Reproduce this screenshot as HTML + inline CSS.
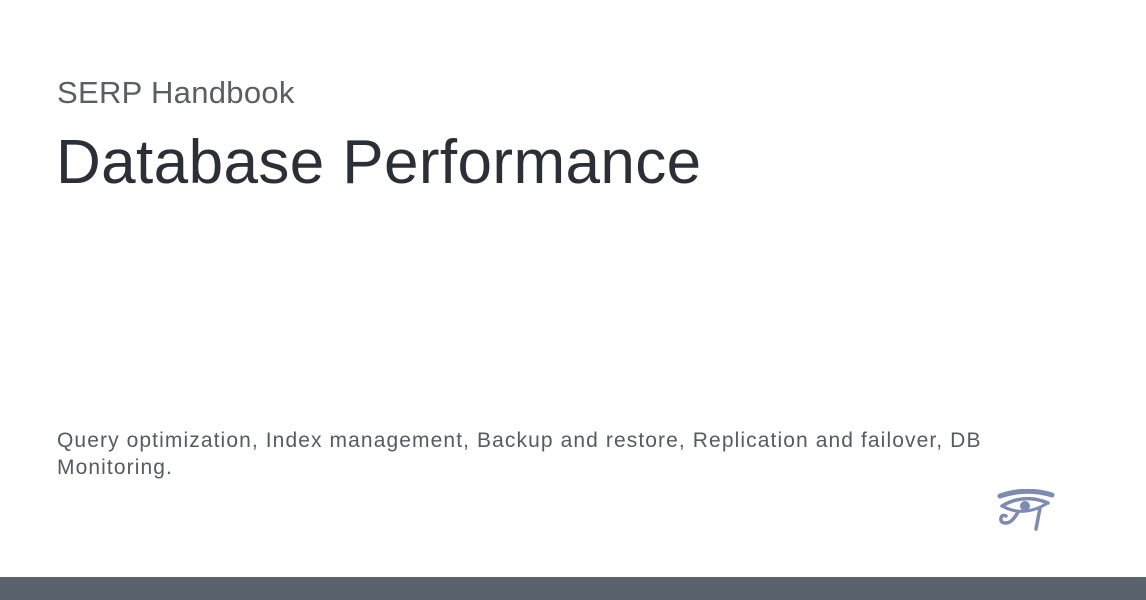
<!DOCTYPE html>
<html><head><style>
html,body{margin:0;padding:0;width:1146px;height:600px;background:#fff;overflow:hidden;font-family:"Liberation Sans",sans-serif;position:relative}
.a{position:absolute;left:57px;top:75px;font-size:31px;letter-spacing:0.3px;color:#5a5f66;white-space:nowrap}
.b{position:absolute;left:56px;top:127px;font-size:62px;letter-spacing:0.4px;color:#2b3038;white-space:nowrap}
.c{position:absolute;left:57px;top:427px;font-size:21px;line-height:27px;letter-spacing:1.1px;color:#555b63;width:960px}
.bar{position:absolute;left:0;top:577px;width:1146px;height:23px;background:#5a626d}
svg{position:absolute;left:996px;top:489px}
</style></head><body>
<div class="a">SERP Handbook</div>
<div class="b">Database Performance</div>
<div class="c">Query optimization, Index management, Backup and restore, Replication and failover, DB Monitoring.</div>
<svg width="60" height="44" viewBox="0 0 60 44" fill="none" stroke="#7d8bb0" stroke-linecap="round">
<path d="M4 7 Q30 -2 56 6" stroke-width="5"/>
<path d="M6 17 Q28 4 52 14" stroke-width="3.5"/>
<path d="M8 18 Q28 28 50 15" stroke-width="3"/>
<circle cx="29" cy="17" r="5" fill="#7d8bb0" stroke="none"/>
<path d="M22 23 Q16 34 10 34 Q4 34 5 29 Q6 25 10 27" stroke-width="3.5"/>
<path d="M44 19 L40 40" stroke-width="3.5"/>
</svg>
<div class="bar"></div>
</body></html>
